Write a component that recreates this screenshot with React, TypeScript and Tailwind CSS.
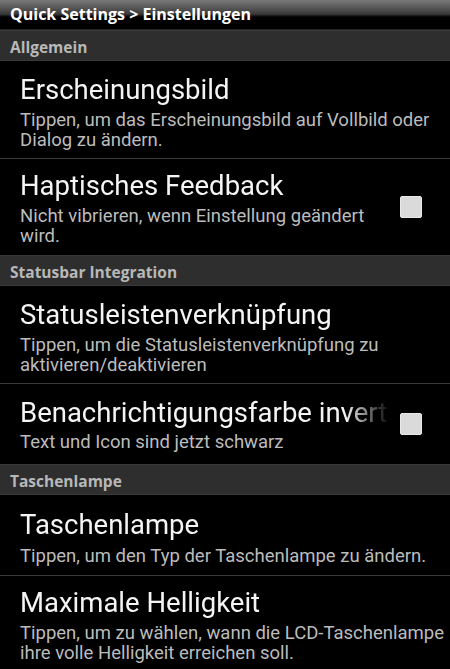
import React from "react";

type Pref = {
  title: string;
  summary: string;
  check?: boolean;
  pt: string;
  gap: string;
  pb: string;
  divider?: boolean;
};

type Section = { name: string; items: Pref[] };

const sections: Section[] = [
  {
    name: "Allgemein",
    items: [
      {
        title: "Erscheinungsbild",
        summary: "Tippen, um das Erscheinungsbild auf Vollbild oder Dialog zu ändern.",
        pt: "pt-[11px]",
        gap: "mt-[2px]",
        pb: "pb-[8px]",
        divider: true,
      },
      {
        title: "Haptisches Feedback",
        summary: "Nicht vibrieren, wenn Einstellung geändert wird.",
        check: true,
        pt: "pt-[9px]",
        gap: "mt-[2px]",
        pb: "pb-[9px]",
      },
    ],
  },
  {
    name: "Statusbar Integration",
    items: [
      {
        title: "Statusleistenverknüpfung",
        summary: "Tippen, um die Statusleistenverknüpfung zu aktivieren/deaktivieren",
        pt: "pt-[11px]",
        gap: "mt-[2px]",
        pb: "pb-[8px]",
        divider: true,
      },
      {
        title: "Benachrichtigungsfarbe invertieren",
        summary: "Text und Icon sind jetzt schwarz",
        check: true,
        pt: "pt-[11px]",
        gap: "mt-[1px]",
        pb: "pb-[12px]",
      },
    ],
  },
  {
    name: "Taschenlampe",
    items: [
      {
        title: "Taschenlampe",
        summary: "Tippen, um den Typ der Taschenlampe zu ändern.",
        pt: "pt-[12px]",
        gap: "mt-[3px]",
        pb: "pb-[9px]",
        divider: true,
      },
      {
        title: "Maximale Helligkeit",
        summary: "Tippen, um zu wählen, wann die LCD-Taschenlampe ihre volle Helligkeit erreichen soll.",
        pt: "pt-[9px]",
        gap: "mt-[2px]",
        pb: "pb-[10px]",
      },
    ],
  },
];

function Checkbox() {
  return (
    <div className="w-[22px] h-[22px] shrink-0 rounded-[2px] bg-[#dadada] border border-[#e8e8e8] mr-[28px] ml-[20px]" />
  );
}

function PrefRow({ pref }: { pref: Pref }) {
  return (
    <div className={"flex items-center bg-black " + (pref.divider ? "border-b border-[#3a3a3a]" : "")}>
      <div className={"flex-1 min-w-0 pl-[20px] " + pref.pt + " " + pref.pb}>
        <div
          className={
            "text-[27.5px] leading-[36px] text-[#f4f4f4] whitespace-nowrap overflow-hidden [mask-image:linear-gradient(to_right,black_88%,transparent)] " +
            (pref.check ? "-mr-[10px]" : "")
          }
        >
          {pref.title}
        </div>
        <div className={"text-[18.5px] leading-[20px] text-[#bcbcbc] " + pref.gap}>{pref.summary}</div>
      </div>
      {pref.check && <Checkbox />}
    </div>
  );
}

export default function App() {
  return (
    <div className="w-[450px] h-[669px] overflow-hidden bg-black font-['Roboto',sans-serif]">
      <div className="h-[30px] bg-[linear-gradient(to_bottom,#7a7a7a_0px,#3a3a3a_14px,#000000_17px,#000000_29px)] px-[10px] border-b border-[#262626]">
        <div className="font-['Open_Sans',sans-serif] text-[16px] leading-[29px] font-bold text-white">
          Quick Settings &gt; Einstellungen
        </div>
      </div>
      {sections.map((s) => (
        <div key={s.name}>
          <div className="h-[31px] overflow-hidden bg-[#2e2e2e] border-t border-[#383838] border-b border-b-[#3a3a3a] px-[10px]">
            <div className="font-['Open_Sans',sans-serif] text-[15.5px] leading-[26px] pt-[3px] font-bold text-[#b8b8b8]">
              {s.name}
            </div>
          </div>
          {s.items.map((p) => (
            <PrefRow key={p.title} pref={p} />
          ))}
        </div>
      ))}
    </div>
  );
}
